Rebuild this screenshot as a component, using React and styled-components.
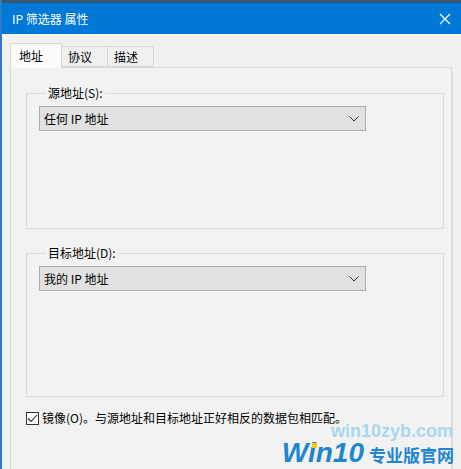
import styled, { createGlobalStyle } from 'styled-components';

const GlobalStyle = createGlobalStyle`
  html, body {
    margin: 0;
    padding: 0;
    background: #f0f0f0;
  }
  body {
    font-family: "Noto Sans CJK SC", "Liberation Sans", sans-serif;
    font-size: 12px;
    color: #000;
  }
`;

const Window = styled.div`
  position: relative;
  width: 461px;
  height: 469px;
  overflow: hidden;
  background: #f0f0f0;
  box-sizing: border-box;
  border-left: 2px solid #2a7bd0;
`;

const TopEdge = styled.div`
  height: 3px;
  background: #36556e;
`;

const TitleBar = styled.div`
  display: flex;
  align-items: center;
  justify-content: space-between;
  height: 31px;
  padding: 0 4px 0 10px;
  background: #0078d7;
  color: #fff;
  font-size: 12px;
`;

const CloseButton = styled.div`
  display: flex;
  align-items: center;
  justify-content: center;
  width: 24px;
  height: 24px;
`;

const Glow = styled.div`
  height: 2px;
  background: #fbf4e6;
`;

const Body = styled.div`
  padding: 7px 0 0 8px;
`;

const TabRow = styled.div`
  display: flex;
  align-items: flex-end;
  height: 24px;
  position: relative;
  z-index: 1;
`;

const Tab = styled.div`
  box-sizing: border-box;
  height: ${(p) => (p.$active ? '25px' : '21px')};
  margin-bottom: ${(p) => (p.$active ? '-1px' : '0')};
  padding: ${(p) => (p.$active ? '4px 0 0 8px' : '2px 0 0 6px')};
  width: ${(p) => p.$w}px;
  background: ${(p) => (p.$active ? '#fbfbfb' : '#f0f0f0')};
  border: 1px solid #d9d9d9;
  border-bottom: ${(p) => (p.$active ? 'none' : '1px solid #d9d9d9')};
  border-left: ${(p) => (p.$first || p.$active ? '1px solid #d9d9d9' : 'none')};
  font-size: 12px;
  line-height: 16px;
`;

const Panel = styled.div`
  box-sizing: border-box;
  width: 442px;
  height: 420px;
  padding: 17px 0 0 15px;
  background: #f2f2f2;
  border: 1px solid #d9d9d9;
  box-shadow: 6px 0 0 -5px #dcdcdc;
`;

const Group = styled.fieldset`
  box-sizing: border-box;
  width: 418px;
  height: ${(p) => p.$h}px;
  margin: 0 0 ${(p) => p.$gap || 0}px 0;
  padding: 5px 0 0 12px;
  border: 1px solid #dcdcdc;
`;

const Legend = styled.legend`
  margin-left: 7px;
  padding: 0 2px;
  font-size: 12px;
  line-height: 16px;
`;

const Combo = styled.div`
  box-sizing: border-box;
  display: flex;
  align-items: center;
  justify-content: space-between;
  width: 327px;
  height: 25px;
  padding: 0 6px 0 4px;
  background: #e1e1e1;
  border: 1px solid #adadad;
  font-size: 12px;
`;

const CheckRow = styled.div`
  display: flex;
  align-items: center;
  gap: 3px;
  margin-top: 13px;
  font-size: 12px;
  line-height: 16px;
`;

const CheckBox = styled.div`
  box-sizing: border-box;
  width: 13px;
  height: 13px;
  background: #fff;
  border: 1px solid #333;
  display: flex;
  align-items: center;
  justify-content: center;
`;

const MarkSmall = styled.div`
  position: absolute;
  right: 8px;
  top: 421px;
  font-family: "Liberation Sans", Arial, sans-serif;
  font-weight: bold;
  font-size: 18px;
  line-height: 20px;
  color: #a8d8ee;
`;

const MarkBig = styled.div`
  position: absolute;
  right: 7px;
  top: 439px;
  display: flex;
  align-items: baseline;
  gap: 5px;
  line-height: 1;
  color: #1d86cf;
`;

const MarkWin = styled.span`
  position: relative;
  font-family: "Liberation Sans", Arial, sans-serif;
  font-style: italic;
  font-weight: bold;
  font-size: 28px;
`;

const MarkDot = styled.span`
  position: absolute;
  left: 30px;
  top: 4px;
  width: 5px;
  height: 5px;
  background: #ffc20e;
`;

const MarkCn = styled.span`
  font-weight: bold;
  font-size: 17px;
`;

function Chevron() {
  return (
    <svg width="10" height="6" viewBox="0 0 10 6">
      <path d="M0.5 0.5 L5 5 L9.5 0.5" fill="none" stroke="#333" strokeWidth="1" />
    </svg>
  );
}

function Close() {
  return (
    <svg width="12" height="12" viewBox="0 0 12 12">
      <path d="M1 1 L11 11 M11 1 L1 11" stroke="#fff" strokeWidth="1.2" />
    </svg>
  );
}

const tabs = [
  { label: '地址', w: 52, active: true },
  { label: '协议', w: 46 },
  { label: '描述', w: 46 },
];

const groups = [
  { legend: '源地址(S):', value: '任何 IP 地址', h: 144, gap: 16 },
  { legend: '目标地址(D):', value: '我的 IP 地址', h: 152 },
];

export default function App() {
  return (
    <>
      <GlobalStyle />
      <Window>
        <TopEdge />
        <TitleBar>
          <span>IP 筛选器 属性</span>
          <CloseButton>
            <Close />
          </CloseButton>
        </TitleBar>
        <Glow />
        <Body>
          <TabRow>
            {tabs.map((t, i) => (
              <Tab key={t.label} $w={t.w} $active={t.active} $first={i === 0}>
                {t.label}
              </Tab>
            ))}
          </TabRow>
          <Panel>
            {groups.map((g) => (
              <Group key={g.legend} $h={g.h} $gap={g.gap}>
                <Legend>{g.legend}</Legend>
                <Combo>
                  <span>{g.value}</span>
                  <Chevron />
                </Combo>
              </Group>
            ))}
            <CheckRow>
              <CheckBox>
                <svg width="11" height="9" viewBox="0 0 11 9">
                  <path d="M1 4.5 L4 7.5 L10 1" fill="none" stroke="#222" strokeWidth="1.1" />
                </svg>
              </CheckBox>
              <span>镜像(O)。与源地址和目标地址正好相反的数据包相匹配。</span>
            </CheckRow>
          </Panel>
        </Body>
        <MarkSmall>win10zyb.com</MarkSmall>
        <MarkBig>
          <MarkWin>
            Win10
            <MarkDot />
          </MarkWin>
          <MarkCn>专业版官网</MarkCn>
        </MarkBig>
      </Window>
    </>
  );
}
